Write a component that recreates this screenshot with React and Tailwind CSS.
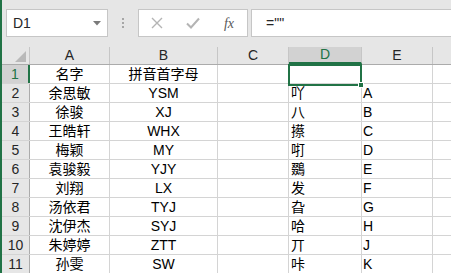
const rows = [
  ["名字", "拼音首字母", "", "", ""],
  ["余思敏", "YSM", "", "吖", "A"],
  ["徐骏", "XJ", "", "八", "B"],
  ["王皓轩", "WHX", "", "攃", "C"],
  ["梅颖", "MY", "", "咑", "D"],
  ["袁骏毅", "YJY", "", "鵽", "E"],
  ["刘翔", "LX", "", "发", "F"],
  ["汤依君", "TYJ", "", "旮", "G"],
  ["沈伊杰", "SYJ", "", "哈", "H"],
  ["朱婷婷", "ZTT", "", "丌", "J"],
  ["孙雯", "SW", "", "咔", "K"],
];

const font = { fontFamily: '"Liberation Sans", "Noto Sans CJK SC", sans-serif' };

function HeaderCell({ w, label, selected }) {
  return (
    <div
      className={`${w} shrink-0 h-full flex items-center justify-center border-r border-[#c6c6c6] text-[14px] ${
        selected ? "bg-[#d2d2d2] text-[#217346] border-b-2 border-b-[#217346]" : "text-[#262626]"
      }`}
    >
      {label}
    </div>
  );
}

export default function App() {
  return (
    <div className="w-[451px] h-[273px] overflow-hidden bg-[#e6e6e6] flex" style={font}>
      <div className="w-[2px] shrink-0 bg-[#217346]" />
      <div className="flex-1 min-w-0 flex flex-col">
        {/* formula bar */}
        <div className="h-[47px] shrink-0 flex items-start pt-[9px]">
          <div className="ml-[4px] w-[102px] h-[28px] bg-white border border-[#c6c6c6] flex items-center justify-between pl-[6px] pr-[6px]">
            <span className="text-[14px] text-[#262626]">D1</span>
            <svg width="8" height="5" viewBox="0 0 8 5">
              <path d="M0 0 L8 0 L4 4.5 Z" fill="#7a7a7a" />
            </svg>
          </div>
          <div className="w-[30px] h-[28px] flex flex-col items-center justify-center gap-[2px]">
            <div className="w-[2px] h-[2px] bg-[#a6a6a6]" />
            <div className="w-[2px] h-[2px] bg-[#a6a6a6]" />
            <div className="w-[2px] h-[2px] bg-[#a6a6a6]" />
          </div>
          <div className="w-[110px] h-[28px] bg-white border border-[#c6c6c6] flex">
            <div className="w-[36px] flex items-center justify-center">
              <svg width="12" height="12" viewBox="0 0 12 12">
                <path d="M1 1 L11 11 M11 1 L1 11" stroke="#b4b4b4" strokeWidth="1.4" />
              </svg>
            </div>
            <div className="w-[36px] flex items-center justify-center">
              <svg width="14" height="12" viewBox="0 0 14 12">
                <path d="M1 6.5 L5 10.5 L13 1.5" stroke="#b4b4b4" strokeWidth="2" fill="none" />
              </svg>
            </div>
            <div className="w-[36px] flex items-center justify-center">
              <span
                className="italic text-[14px] text-[#595959]"
                style={{ fontFamily: '"Liberation Serif", serif' }}
              >
                fx
              </span>
            </div>
          </div>
          <div className="ml-[3px] flex-1 h-[28px] bg-white border border-[#c6c6c6] mr-[-1px] flex items-center pl-[14px] text-[14px] text-[#262626]">
            =&quot;&quot;
          </div>
        </div>

        {/* header row */}
        <div className="h-[18px] shrink-0 flex border-b border-[#ababab]">
          <div className="w-[28px] shrink-0 h-full border-r border-[#c6c6c6] relative">
            <svg className="absolute right-[3px] bottom-[2px]" width="11" height="11" viewBox="0 0 11 11">
              <path d="M11 0 L11 11 L0 11 Z" fill="#b9b9b9" />
            </svg>
          </div>
          <HeaderCell w="w-[80px]" label="A" />
          <HeaderCell w="w-[108px]" label="B" />
          <HeaderCell w="w-[71px]" label="C" />
          <HeaderCell w="w-[73px]" label="D" selected />
          <HeaderCell w="w-[71px]" label="E" />
          <div className="flex-1 h-full" />
        </div>

        {/* data rows */}
        <div className="flex-1 bg-white flex flex-col text-[14px] text-black">
          {rows.map((r, i) => {
            const sel = i === 0;
            return (
              <div key={i} className="h-[19px] shrink-0 flex border-b border-[#d4d4d4]">
                <div
                  className={`w-[28px] shrink-0 h-full flex items-center justify-center ${
                    sel
                      ? "bg-[#d2d2d2] text-[#217346] border-r-2 border-[#217346]"
                      : "bg-[#e6e6e6] text-[#262626] border-r border-[#ababab]"
                  }`}
                >
                  {i + 1}
                </div>
                <div className="w-[80px] shrink-0 h-full border-r border-[#d4d4d4] flex items-center justify-center leading-none">
                  {r[0]}
                </div>
                <div className="w-[108px] shrink-0 h-full border-r border-[#d4d4d4] flex items-center justify-center leading-none">
                  {r[1]}
                </div>
                <div className="w-[71px] shrink-0 h-full border-r border-[#d4d4d4]" />
                <div className="w-[73px] shrink-0 h-full border-r border-[#d4d4d4] flex items-center pl-[2px] leading-none relative">
                  {r[3]}
                  {sel && (
                    <div className="absolute left-[-1px] top-[-1px] w-[74px] h-[22px] border-2 border-[#217346] z-10">
                      <div className="absolute right-[-4px] bottom-[-4px] w-[6px] h-[6px] bg-[#217346] border border-white" />
                    </div>
                  )}
                </div>
                <div className="w-[71px] shrink-0 h-full border-r border-[#d4d4d4] flex items-center pl-[1px] leading-none">
                  {r[4]}
                </div>
                <div className="flex-1 h-full" />
              </div>
            );
          })}
        </div>
      </div>
    </div>
  );
}
